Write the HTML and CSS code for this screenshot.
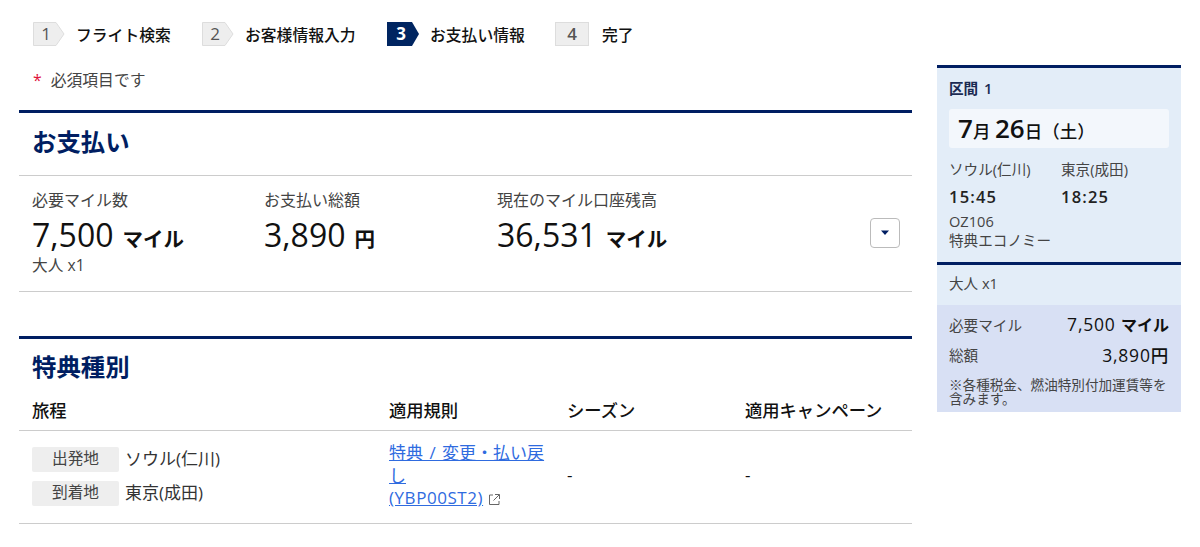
FILE: index.html
```html
<!DOCTYPE html>
<html>

	<head>
		<meta charset="UTF-8">
		<title>お支払い情報</title>
		<link rel="stylesheet" href="styles.css">
	</head>

	<body>
		<div class="page">
			<div class="main">
				<ol class="steps">
					<li class="step step1">
						<svg class="badge" width="32" height="24" viewBox="0 0 32 24"><polygon points="0.5,0.5 23,0.5 31,12 23,23.5 0.5,23.5" fill="#eee" stroke="#ddd"/><text x="13" y="18" text-anchor="middle" class="badgeNum">1</text></svg>
						<span>フライト検索</span>
					</li>
					<li class="step step2">
						<svg class="badge" width="32" height="24" viewBox="0 0 32 24"><polygon points="0.5,0.5 23,0.5 31,12 23,23.5 0.5,23.5" fill="#eee" stroke="#ddd"/><text x="13" y="18" text-anchor="middle" class="badgeNum">2</text></svg>
						<span>お客様情報入力</span>
					</li>
					<li class="step step3">
						<svg class="badge" width="32" height="24" viewBox="0 0 32 24"><polygon points="0,0 25,0 32,12 25,24 0,24" fill="#002561"/><text x="14" y="18" text-anchor="middle" class="badgeNum current">3</text></svg>
						<span>お支払い情報</span>
					</li>
					<li class="step step4">
						<span class="lastBadge">4</span>
						<span>完了</span>
					</li>
				</ol>

				<p class="required"><em>*</em>必須項目です</p>

				<section class="panel">
					<h2>お支払い</h2>
					<div class="summary">
						<div class="sumCol col1">
							<div class="sumLabel">必要マイル数</div>
							<div class="sumValue">7,500<small>マイル</small></div>
							<div class="sumNote">大人 x1</div>
						</div>
						<div class="sumCol col2">
							<div class="sumLabel">お支払い総額</div>
							<div class="sumValue">3,890<small>円</small></div>
						</div>
						<div class="sumCol col3">
							<div class="sumLabel">現在のマイル口座残高</div>
							<div class="sumValue">36,531<small>マイル</small></div>
						</div>
						<a href="##" class="toggle"><svg width="10" height="6" viewBox="0 0 10 6"><polygon points="1,0.5 9,0.5 5,5" fill="#001e62"/></svg></a>
					</div>
				</section>

				<section class="panel panel2">
					<h2>特典種別</h2>
					<div class="fareHead">
						<div class="cItin">旅程</div>
						<div class="cRule">適用規則</div>
						<div class="cSeason">シーズン</div>
						<div class="cCamp">適用キャンペーン</div>
					</div>
					<div class="fareRow">
						<div class="cItin">
							<div class="place"><span class="tag">出発地</span>ソウル(仁川)</div>
							<div class="place"><span class="tag">到着地</span>東京(成田)</div>
						</div>
						<div class="cRule">
							<a href="##">特典 / 変更・払い戻し<br><span class="code">(YBP00ST2)</span></a>
							<svg class="ext" width="13" height="13" viewBox="0 0 13 13"><path d="M5 2H1.5V11.5H11V8M7 1.5H11.5V6M11.2 1.8L5.5 7.5" fill="none" stroke="#666" stroke-width="1"/></svg>
						</div>
						<div class="cSeason">-</div>
						<div class="cCamp">-</div>
					</div>
				</section>
			</div>

			<aside class="side">
				<div class="segment">
					<div class="segTitle">区間 1</div>
					<div class="segDate"><b>7</b>月 <b>26</b>日（土）</div>
					<div class="segGrid">
						<div>ソウル(仁川)</div>
						<div>東京(成田)</div>
						<div class="time">15:45</div>
						<div class="time">18:25</div>
					</div>
					<div class="segFlight">OZ106<br>特典エコノミー</div>
				</div>
				<div class="pax">大人 x1</div>
				<div class="total">
					<div class="totalRow"><span>必要マイル</span><strong>7,500 <b>マイル</b></strong></div>
					<div class="totalRow"><span>総額</span><strong class="yen">3,890円</strong></div>
					<p>※各種税金、燃油特別付加運賃等を含みます。</p>
				</div>
			</aside>
		</div>
	</body>

</html>
```

FILE: styles.css
```css
* {
	margin: 0;
	padding: 0;
	list-style: none;
	box-sizing: border-box;
}

body {
	font-family: "Open Sans", "Noto Sans CJK JP", sans-serif;
	font-size: 16px;
	color: #333;
	background: #fff;
}

.page {
	display: flex;
	align-items: flex-start;
	padding-left: 19px;
}

.main {
	width: 893px;
}

/* steps */
.steps {
	display: flex;
	padding: 22px 0 0 14px;
	height: 46px;
}

.step {
	display: flex;
	align-items: center;
	gap: 11px;
	height: 24px;
	font-size: 15.8px;
	font-weight: 500;
	color: #111;
}

.step1 {
	width: 169px;
}

.step2 {
	width: 185px;
}

.step3 {
	width: 168px;
}

.step4 {
	gap: 13px;
}

.badgeNum {
	font-size: 17px;
	fill: #555;
}

.badgeNum.current {
	fill: #fff;
	font-weight: 700;
}

.lastBadge {
	width: 34px;
	height: 24px;
	line-height: 21px;
	text-align: center;
	background: #eee;
	border: 1px solid #ddd;
	font-size: 17px;
	font-weight: 600;
	color: #555;
}

.required {
	height: 64px;
	padding: 24px 0 0 14px;
	font-size: 15.8px;
	line-height: 20px;
	color: #444;
}

.required em {
	font-style: normal;
	color: #e0103a;
	margin-right: 9px;
}

/* panels */
.panel {
	border-top: 3px solid #001e62;
}

.panel h2 {
	padding-left: 13px;
	font-size: 24.4px;
	font-weight: 700;
	line-height: 32px;
	color: #001e62;
}

.panel > h2 {
	padding-top: 13px;
	height: 63px;
	border-bottom: 1px solid #ccc;
}

.summary {
	position: relative;
	display: flex;
	height: 116px;
	padding: 14px 0 0 13px;
	border-bottom: 1px solid #ccc;
}

.sumCol.col1 {
	width: 232px;
}

.sumCol.col2 {
	width: 233px;
}

.sumLabel {
	font-size: 16px;
	line-height: 20px;
	color: #444;
}

.sumValue {
	margin-top: 5px;
	height: 36px;
	font-size: 32px;
	font-weight: 500;
	line-height: 40px;
	color: #111;
}

.sumValue small {
	margin-left: 9px;
	font-size: 20.5px;
	font-weight: 700;
}

.sumNote {
	margin-top: 4px;
	font-size: 15.7px;
	line-height: 20px;
	color: #444;
}

.toggle {
	position: absolute;
	right: 12px;
	top: 42px;
	display: flex;
	align-items: center;
	justify-content: center;
	width: 30px;
	height: 30px;
	border: 1px solid #bbb;
	border-radius: 4px;
}

.panel2 {
	margin-top: 44px;
}

.panel2 > h2 {
	height: auto;
	padding-top: 12px;
	border-bottom: 0;
}

.fareHead,
.fareRow {
	display: flex;
	padding-left: 13px;
	border-bottom: 1px solid #ccc;
}

.fareHead {
	height: 48px;
	padding-top: 17px;
	font-size: 17.3px;
	font-weight: 500;
	line-height: 22px;
	color: #111;
}

.fareRow {
	height: 93px;
	font-size: 17px;
}

.cItin {
	width: 357px;
}

.cRule {
	width: 178px;
}

.cSeason {
	width: 178px;
}

.cCamp {
	width: 165px;
}

.fareRow .cItin {
	padding-top: 16px;
}

.place {
	display: flex;
	align-items: flex-start;
	height: 25px;
	margin-bottom: 9px;
	line-height: 23px;
	color: #333;
}

.tag {
	width: 87px;
	height: 25px;
	margin-right: 6px;
	line-height: 22px;
	text-align: center;
	font-size: 15.7px;
	background: #eee;
	border-radius: 2px;
	color: #444;
}

.fareRow .cRule {
	padding-top: 11px;
	padding-right: 12px;
	line-height: 22.5px;
}

.fareRow .cRule a {
	color: #2f6bdf;
	word-spacing: 2px;
}

.code {
	letter-spacing: 0.55px;
}

.ext {
	vertical-align: -2px;
}

.fareRow .cSeason,
.fareRow .cCamp {
	padding-top: 33px;
	line-height: 22px;
	color: #111;
}

/* side */
.side {
	width: 244px;
	margin-left: 25px;
	margin-top: 65px;
	border-top: 3px solid #001e62;
	background: #e3edf8;
}

.segment {
	height: 197px;
	padding: 11px 12px 0 12px;
	border-bottom: 3px solid #001e62;
}

.segTitle {
	font-size: 14.6px;
	font-weight: 600;
	line-height: 18px;
	word-spacing: 2px;
	color: #1a2a52;
}

.segDate {
	height: 39px;
	margin-top: 12px;
	padding-left: 9px;
	background: #f3f7fc;
	border-radius: 3px;
	font-size: 17.5px;
	font-weight: 500;
	line-height: 39px;
	color: #111;
}

.segDate b {
	font-size: 26px;
	font-weight: 600;
}

.segGrid {
	display: grid;
	grid-template-columns: 112px 1fr;
	margin-top: 10px;
	font-size: 14.6px;
	line-height: 22px;
	color: #444;
}

.segGrid .time {
	margin-top: 6px;
	font-size: 16.5px;
	font-weight: 600;
	letter-spacing: 1.2px;
	color: #222;
}

.segFlight {
	margin-top: 4px;
	font-size: 14.6px;
	line-height: 19px;
	color: #444;
}

.pax {
	height: 40px;
	padding-left: 12px;
	font-size: 14.6px;
	line-height: 36px;
	color: #444;
}

.total {
	height: 107px;
	padding: 4px 12px 0 12px;
	background: #d8e0f4;
}

.totalRow {
	display: flex;
	justify-content: space-between;
	align-items: center;
	height: 30px;
	font-size: 14.6px;
	color: #444;
}

.totalRow strong {
	font-size: 17.5px;
	font-weight: 500;
	letter-spacing: 0.8px;
	color: #111;
}

.totalRow strong b {
	font-size: 16px;
	font-weight: 700;
	letter-spacing: 0;
}

.total p {
	margin-top: 9px;
	font-size: 13.6px;
	line-height: 14px;
	color: #444;
}
```
